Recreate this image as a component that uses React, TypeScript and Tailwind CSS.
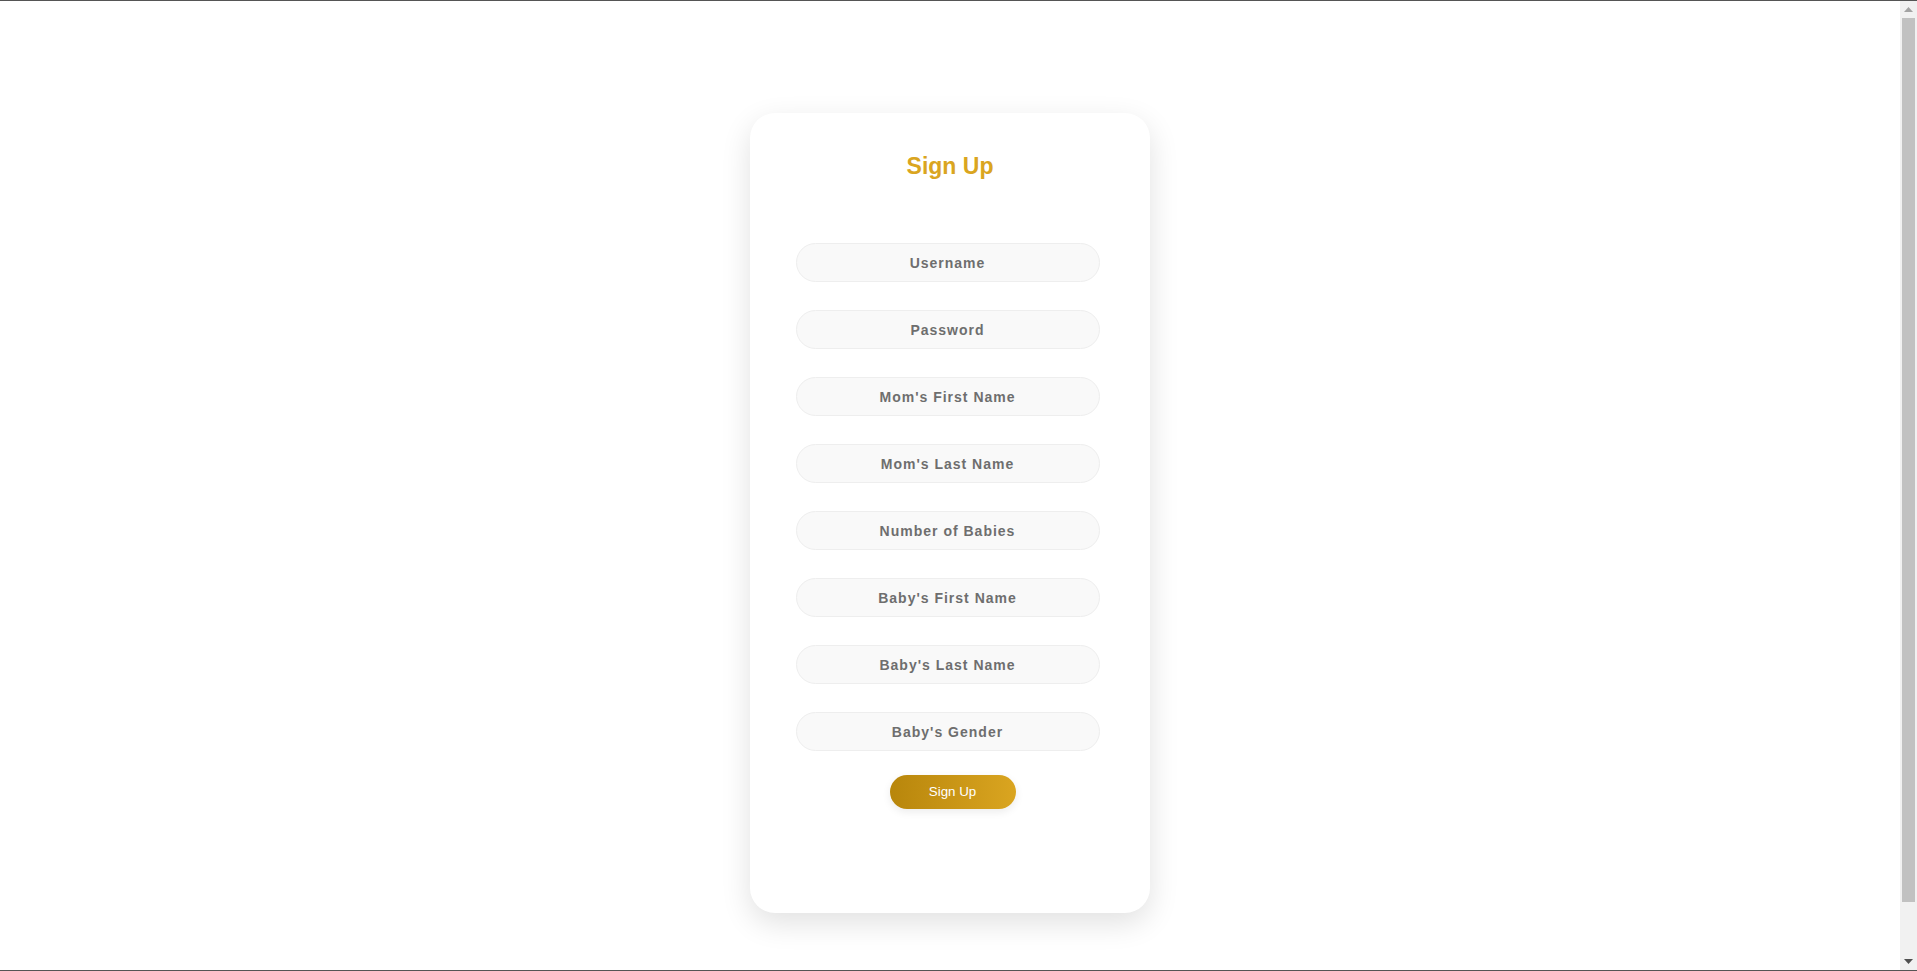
import React from "react";

const fields = [
  "Username",
  "Password",
  "Mom's First Name",
  "Mom's Last Name",
  "Number of Babies",
  "Baby's First Name",
  "Baby's Last Name",
  "Baby's Gender",
];

function Scrollbar() {
  return (
    <div className="flex w-[17px] shrink-0 flex-col bg-[#f1f1f1]">
      <div className="flex h-[17px] items-center justify-center">
        <svg width="9" height="5" viewBox="0 0 9 5">
          <polygon points="0,5 9,5 4.5,0" fill="#a3a3a3" />
        </svg>
      </div>
      <div className="mx-[2px] h-[884px] bg-[#c1c1c1]" />
      <div className="flex-1" />
      <div className="flex h-[17px] items-center justify-center">
        <svg width="9" height="5" viewBox="0 0 9 5">
          <polygon points="0,0 9,0 4.5,5" fill="#505050" />
        </svg>
      </div>
    </div>
  );
}

export default function App() {
  return (
    <div className="flex h-[971px] flex-col overflow-hidden bg-white font-['Liberation_Sans',Arial,sans-serif]">
      <div className="h-px shrink-0 bg-[#555]" />
      <div className="flex min-h-0 flex-1">
        <main className="flex-1 pt-[112px]">
          <div className="mx-auto flex h-[800px] w-[400px] flex-col items-center rounded-[25px] bg-white pt-[39px] shadow-[0_10px_30px_rgba(0,0,0,0.12)]">
            <h2 className="text-[23px] font-bold leading-[28px] text-[#DAA520]">Sign Up</h2>
            <form className="mt-[63px] flex flex-col items-center" onSubmit={(e) => e.preventDefault()}>
              <div className="mr-[5px] flex flex-col gap-[28px]">
                {fields.map((f) => (
                  <input
                    key={f}
                    type={f === "Password" ? "password" : "text"}
                    placeholder={f}
                    className="h-[39px] w-[304px] rounded-full border border-[#eeeeee] bg-[#f9f9f9] text-center text-[14px] font-bold tracking-[1px] text-[#6e6e6e] outline-none placeholder:text-[#6e6e6e]"
                  />
                ))}
              </div>
              <button
                type="submit"
                className="ml-[5px] mt-[24px] h-[34px] w-[126px] rounded-full bg-gradient-to-r from-[#b8860b] to-[#daa520] text-[13.333px] text-white shadow-[0_3px_8px_rgba(0,0,0,0.08)]"
              >
                Sign Up
              </button>
            </form>
          </div>
        </main>
        <Scrollbar />
      </div>
      <div className="h-px shrink-0 bg-[#555]" />
    </div>
  );
}
